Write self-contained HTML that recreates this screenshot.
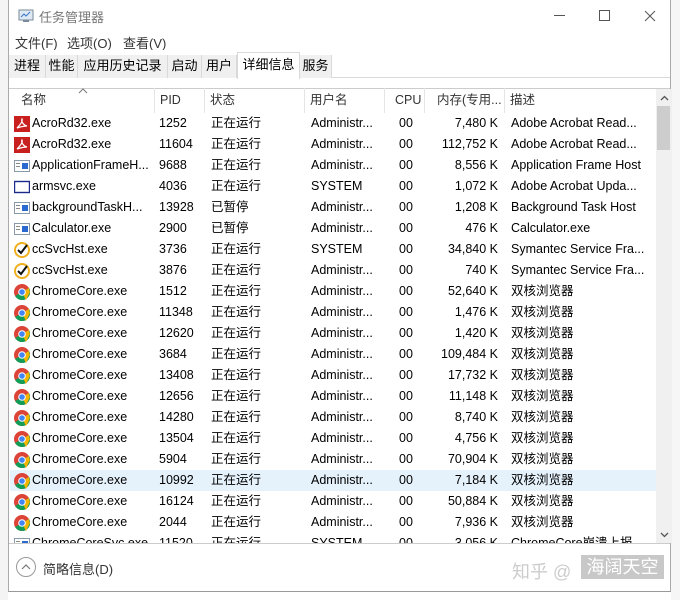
<!DOCTYPE html>
<html><head><meta charset="utf-8"><style>
*{margin:0;padding:0;box-sizing:border-box}
body{width:680px;height:600px;position:relative;overflow:hidden;background:#fff;font-family:"Liberation Sans","Noto Sans CJK SC",sans-serif;font-size:12.5px;color:#000}
.a{position:absolute;white-space:nowrap}
.win{position:absolute;left:8px;top:0;width:663px;height:592px;background:#fff;border-left:1px solid #aaa;border-right:1px solid #aaa;border-bottom:1px solid #999}
.tab{position:absolute;top:55px;height:23px;line-height:22px;text-align:center;background:#f0f0f0;border-right:1px solid #d9d9d9;font-size:13px}
.row{position:absolute;left:1px;width:646px;height:21px;line-height:21px}
.row span{position:absolute;top:0}
.hs{position:absolute;top:88px;height:25px;width:1px;background:#e5e5e5}
.ic{position:absolute;left:4px;top:3px;width:16px;height:16px}
.hd{position:absolute;top:91px;line-height:18px;color:#333;white-space:nowrap}
</style></head><body>
<div class="a" style="left:0;top:0;width:8px;height:600px;background:#f4f4f4"></div>
<div class="a" style="left:671px;top:0;width:9px;height:600px;background:#f6f6f6"></div>
<div class="win">
<svg class="a" style="left:9px;top:9px" width="16" height="14"><rect x="1" y="1" width="14" height="10" fill="#dfe9f4" stroke="#7a8a9a"/><polyline points="3,8 6,5 8,7 12,3" fill="none" stroke="#3a78c8"/><rect x="5" y="11" width="6" height="2" fill="#7a8a9a"/></svg>
<div class="a" style="left:30px;top:7px;font-size:13px;color:#777">任务管理器</div>
<div class="a" style="left:545px;top:15px;width:11px;height:1px;background:#555"></div>
<div class="a" style="left:590px;top:10px;width:11px;height:11px;border:1px solid #555"></div>
<svg class="a" style="left:635px;top:10px" width="12" height="12"><path d="M1 1L11 11M11 1L1 11" stroke="#555"/></svg>
<div class="a" style="left:6px;top:33px;font-size:13px;color:#333">文件(F)</div>
<div class="a" style="left:58px;top:33px;font-size:13px;color:#333">选项(O)</div>
<div class="a" style="left:114px;top:33px;font-size:13px;color:#333">查看(V)</div>
<div class="a" style="left:0;top:50px;width:661px;height:28px;background:#fff;border-bottom:1px solid #d9d9d9"></div>
<div class="tab" style="left:0;width:37px">进程</div>
<div class="tab" style="left:37px;width:32px">性能</div>
<div class="tab" style="left:69px;width:90px">应用历史记录</div>
<div class="tab" style="left:159px;width:34px">启动</div>
<div class="tab" style="left:193px;width:35px">用户</div>
<div class="tab" style="left:228px;top:52px;height:27px;width:63px;background:#fff;border:1px solid #d9d9d9;border-bottom:none;line-height:24px">详细信息</div>
<div class="tab" style="left:291px;width:32px">服务</div>
<div class="a" style="left:0;top:88px;width:661px;height:1px;background:#ccc"></div>
<svg class="a" style="left:69px;top:88px" width="10" height="6"><path d="M1 5L5 1L9 5" fill="none" stroke="#777"/></svg>
<div class="hs" style="left:145px"></div><div class="hs" style="left:195px"></div><div class="hs" style="left:295px"></div><div class="hs" style="left:375px"></div><div class="hs" style="left:415px"></div><div class="hs" style="left:495px"></div>
<div class="hd" style="left:12px">名称</div>
<div class="hd" style="left:151px">PID</div>
<div class="hd" style="left:201px">状态</div>
<div class="hd" style="left:301px">用户名</div>
<div class="hd" style="left:386px">CPU</div>
<div class="hd" style="left:428px">内存(专用...</div>
<div class="hd" style="left:501px">描述</div>
<div class="a" style="left:647px;top:89px;width:16px;height:454px;background:#f0f0f0"></div>
<div class="a" style="left:648px;top:106px;width:13px;height:44px;background:#cdcdcd"></div>
<svg class="a" style="left:651px;top:95px" width="9" height="6"><path d="M1 5L4.5 1.5L8 5" fill="none" stroke="#555" stroke-width="1.3"/></svg>
<svg class="a" style="left:651px;top:532px" width="9" height="6"><path d="M1 1L4.5 4.5L8 1" fill="none" stroke="#555" stroke-width="1.3"/></svg>
<div id="rows"></div>
<div class="a" style="left:0;top:543px;width:661px;height:1px;background:#ccc"></div>
<div class="a" style="left:7px;top:557px;width:20px;height:20px;border:1px solid #999;border-radius:50%"></div>
<svg class="a" style="left:11px;top:562px" width="12" height="10"><path d="M2 7L6 3L10 7" fill="none" stroke="#777" stroke-width="1.2"/></svg>
<div class="a" style="left:34px;top:559px;font-size:13px;color:#333">简略信息(D)</div>
<div class="a" style="left:503px;top:558px;font-size:18px;color:#ccc">知乎 @</div>
<div class="a" style="left:572px;top:555px;width:83px;height:24px;background:#c8c8c8;color:#fff;font-size:18px;line-height:24px;text-align:center">海阔天空</div>
</div>
<script>
var acro='<svg class="ic" viewBox="0 0 16 16"><rect width="16" height="16" fill="#c8201e"/><path d="M3 12C6 9 9 5 8 3C7 5 9 9 13 10C9 10 6 11 3 12Z" fill="none" stroke="#fff" stroke-width="1.2"/></svg>';
var app='<svg class="ic" viewBox="0 0 16 16"><rect x="0.5" y="2.5" width="15" height="11" fill="#fff" stroke="#8a9aaa"/><rect x="2" y="5" width="4" height="1" fill="#888"/><rect x="2" y="8" width="4" height="1" fill="#888"/><rect x="8" y="5" width="6" height="6" fill="#2a6ad0"/></svg>';
var box='<svg class="ic" viewBox="0 0 16 16"><rect x="0.5" y="2.5" width="15" height="11" fill="#fff" stroke="#1a2a8a" stroke-width="1.4"/></svg>';
var sym='<svg class="ic" viewBox="0 0 16 16"><circle cx="8" cy="8" r="7" fill="#fff" stroke="#f0b020" stroke-width="2"/><path d="M4 8L7 11L13 3" fill="none" stroke="#111" stroke-width="2"/></svg>';
var chr='<svg class="ic" viewBox="0 0 16 16"><circle cx="8" cy="8" r="8" fill="#db4437"/><path d="M8 8L1.1 12A8 8 0 0 0 8 16Z" fill="#0f9d58"/><path d="M8 8L8 16A8 8 0 0 0 15 4Z" fill="#0f9d58"/><path d="M8 8L15 4A8 8 0 0 0 16 8L12 16Z" fill="#f4b400"/><circle cx="8" cy="8" r="3.8" fill="#fff"/><circle cx="8" cy="8" r="2.8" fill="#4285f4"/></svg>';
var R=[[acro,'AcroRd32.exe','1252','正在运行','Administr...','7,480 K','Adobe Acrobat Read...'],
[acro,'AcroRd32.exe','11604','正在运行','Administr...','112,752 K','Adobe Acrobat Read...'],
[app,'ApplicationFrameH...','9688','正在运行','Administr...','8,556 K','Application Frame Host'],
[box,'armsvc.exe','4036','正在运行','SYSTEM','1,072 K','Adobe Acrobat Upda...'],
[app,'backgroundTaskH...','13928','已暂停','Administr...','1,208 K','Background Task Host'],
[app,'Calculator.exe','2900','已暂停','Administr...','476 K','Calculator.exe'],
[sym,'ccSvcHst.exe','3736','正在运行','SYSTEM','34,840 K','Symantec Service Fra...'],
[sym,'ccSvcHst.exe','3876','正在运行','Administr...','740 K','Symantec Service Fra...']];
var C=[['1512','52,640 K'],['11348','1,476 K'],['12620','1,420 K'],['3684','109,484 K'],['13408','17,732 K'],['12656','11,148 K'],['14280','8,740 K'],['13504','4,756 K'],['5904','70,904 K'],['10992','7,184 K'],['16124','50,884 K'],['2044','7,936 K']];
C.forEach(function(c){R.push([chr,'ChromeCore.exe',c[0],'正在运行','Administr...',c[1],'双核浏览器'])});
R.push([app,'ChromeCoreSvc.exe','11520','正在运行','SYSTEM','3,056 K','ChromeCore崩溃上报']);
var h='';
R.forEach(function(r,i){
var top=113+i*21;var ht=Math.min(21,543-top);
h+='<div class="row" style="top:'+top+'px;height:'+ht+'px;overflow:hidden;'+(i==17?'background:#e5f1fb;':'')+'">'+r[0]+
'<span style="left:22px">'+r[1]+'</span><span style="left:149px">'+r[2]+'</span><span style="left:201px">'+r[3]+'</span><span style="left:301px">'+r[4]+'</span><span style="left:389px">00</span><span style="left:414px;width:74px;text-align:right">'+r[5]+'</span><span style="left:501px">'+r[6]+'</span></div>';
});
document.getElementById('rows').outerHTML=h;
</script>
</body></html>
